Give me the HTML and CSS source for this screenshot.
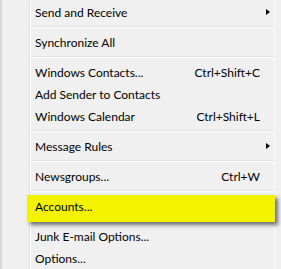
FILE: index.html
```html
<!DOCTYPE html>
<html lang="en">
<head>
    <meta charset="UTF-8">
    <title>Tools menu</title>
    <link rel="stylesheet" href="styles.css">
</head>
<body>
    <div class="menu">
        <ul class="list">
            <li class="item sub"><span class="label">Send and Receive</span><span class="arrow"></span></li>
            <li class="sep"></li>
            <li class="item"><span class="label">Synchronize All</span></li>
            <li class="sep"></li>
            <li class="item"><span class="label">Windows Contacts...</span><span class="keys">Ctrl+Shift+C</span></li>
            <li class="item"><span class="label">Add Sender to Contacts</span></li>
            <li class="item"><span class="label">Windows Calendar</span><span class="keys">Ctrl+Shift+L</span></li>
            <li class="sep"></li>
            <li class="item sub"><span class="label">Message Rules</span><span class="arrow"></span></li>
            <li class="sep"></li>
            <li class="item"><span class="label">Newsgroups...</span><span class="keys">Ctrl+W</span></li>
            <li class="sep"></li>
            <!-- highlighted entry -->
            <li class="item marked"><span class="label">Accounts...</span></li>
            <li class="sep"></li>
            <li class="item"><span class="label">Junk E-mail Options...</span></li>
            <li class="item"><span class="label">Options...</span></li>
        </ul>
    </div>
</body>
</html>
```

FILE: styles.css
```css
body {
    margin: 0;
    background-color: #f0f0f0;
    font-family: Lato, "Noto Sans", sans-serif;
    font-size: 12px;
    color: #000;
}

.menu {
    height: 269px;
    overflow: hidden;
    padding-top: 1px;
    border-left: 2px solid #d9d9d9;
    box-sizing: border-box;
}

.list {
    list-style: none;
    margin: 0 6px 0 27px;
    padding: 0;
    border-left: 1px solid #e0e0e0;
    border-right: 1px solid #fafafa;
    box-shadow: inset 1px 0 #fff;
    min-height: 280px;
}

.item {
    display: flex;
    align-items: center;
    height: 22px;
    padding: 0 14px 0 5px;
}

.item .label {
    flex: 1;
    white-space: nowrap;
}

.item .keys {
    white-space: nowrap;
}

.item.sub {
    padding-right: 4px;
}

.arrow {
    width: 0;
    height: 0;
    border-left: 4px solid #000;
    border-top: 3px solid transparent;
    border-bottom: 3px solid transparent;
}

.sep {
    height: 1px;
    margin: 3px 0 3px 1px;
    border-top: 1px solid #e0e0e0;
    background-color: #fff;
}

.item.marked {
    position: relative;
    z-index: 0;
}

/* yellow marker drawn over the row */
.item.marked::before {
    content: "";
    position: absolute;
    top: 0;
    left: -3px;
    right: -1px;
    height: 27px;
    background-color: #f3f300;
    box-shadow: 3px 3px 4px rgba(0, 0, 0, 0.55);
    z-index: -1;
}
```
